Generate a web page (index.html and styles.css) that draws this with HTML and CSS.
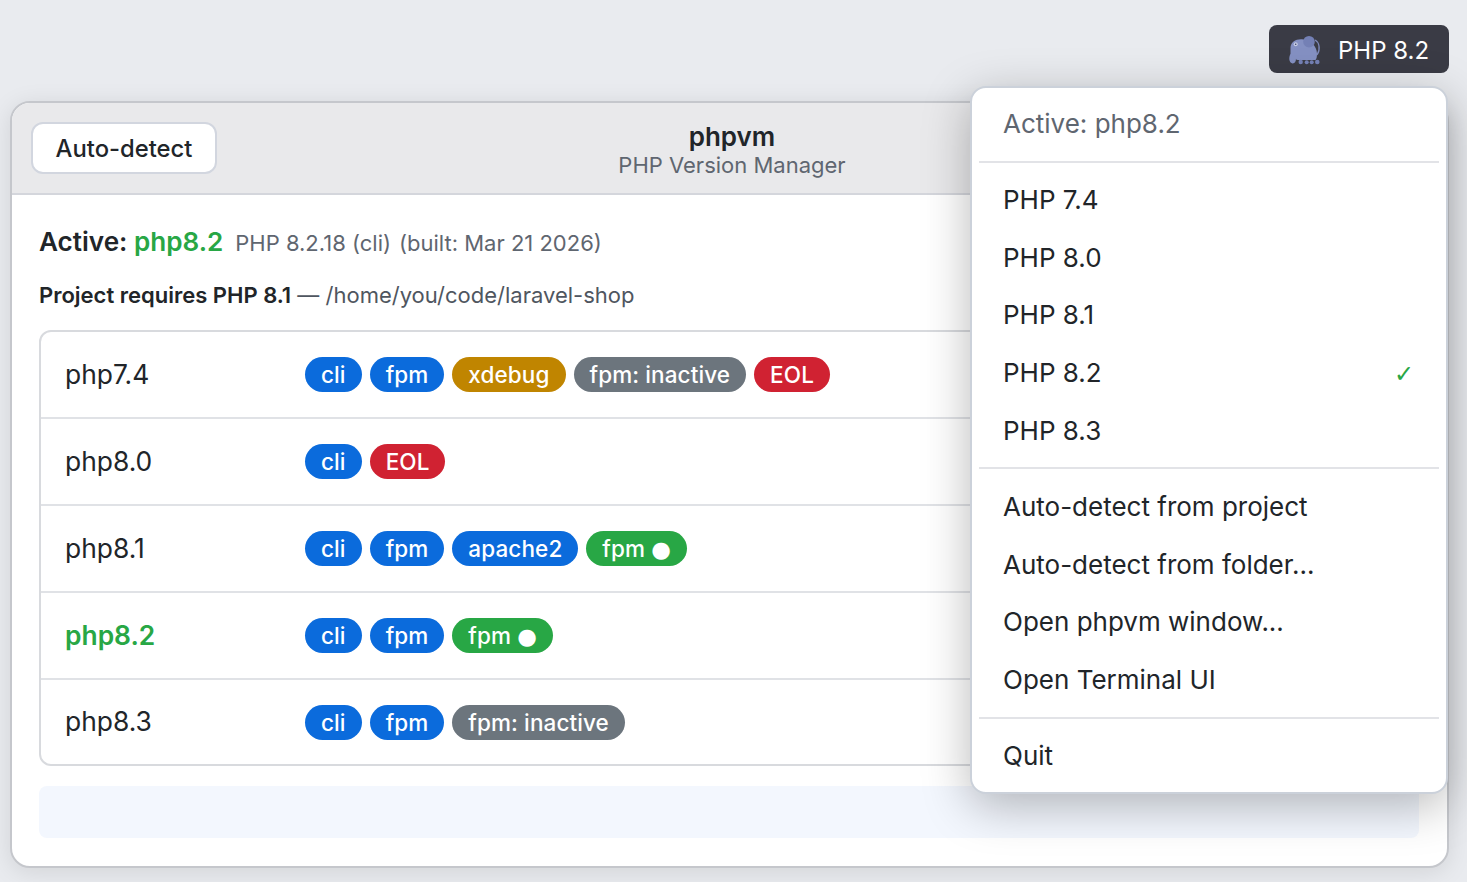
FILE: index.html
```html
<!DOCTYPE html>
<html lang="en">
  <head>
    <meta charset="UTF-8" />
    <title>phpvm</title>
    <link rel="stylesheet" href="styles.css">
  </head>
  <body>
    <div class="topbar">
      <div class="tray-button">
        <svg class="elephant" width="34" height="32" viewBox="0 0 34 32">
          <path d="M27 7c4 2 6 9 2 15" fill="none" stroke="#7f8abb" stroke-width="1.300" />
          <path d="M2.500 14.700C2.500 9 8 5.700 14 6.200 22 6.700 29 12.700 29 20.700 29 23.700 28.500 26 27.500 27H11C9 27 8 26.700 8 25.700 8 29 6 31 4 30.200 1 29.200.5 24.700 2.500 20.700z" fill="#8490c2" />
          <circle cx="21" cy="8.700" r="5.800" fill="#7480b5" />
          <circle cx="12.700" cy="29" r="2.200" fill="#7480b5" />
          <circle cx="18.700" cy="29.300" r="2" fill="#7480b5" />
          <circle cx="23.700" cy="29.300" r="2" fill="#7480b5" />
          <circle cx="29.300" cy="29" r="2.300" fill="#7480b5" />
          <circle cx="7.700" cy="11.300" r="2" fill="#c6cce4" />
          <circle cx="7.700" cy="11.300" r=".8" fill="#3f4668" />
        </svg>
        <span class="tray-label">PHP 8.2</span>
      </div>
    </div>

    <main class="window">
      <header class="titlebar">
        <button class="detect-button">Auto-detect</button>
        <div class="title">
          <h1>phpvm</h1>
          <p>PHP Version Manager</p>
        </div>
      </header>
      <section class="content">
        <div class="active-line">
          <strong>Active: <span class="green">php8.2</span></strong>
          <span class="build">PHP 8.2.18 (cli)</span>
          <span class="build">(built: Mar 21 2026)</span>
        </div>
        <p class="project"><strong>Project requires PHP 8.1</strong> — /home/you/code/laravel-shop</p>
        <ul class="versions">
          <li>
            <span class="name">php7.4</span>
            <span class="badge blue">cli</span>
            <span class="badge blue">fpm</span>
            <span class="badge amber">xdebug</span>
            <span class="badge gray">fpm: inactive</span>
            <span class="badge red">EOL</span>
          </li>
          <li>
            <span class="name">php8.0</span>
            <span class="badge blue">cli</span>
            <span class="badge red">EOL</span>
          </li>
          <li>
            <span class="name">php8.1</span>
            <span class="badge blue">cli</span>
            <span class="badge blue">fpm</span>
            <span class="badge blue">apache2</span>
            <span class="badge green-bg">fpm <span class="dot">●</span></span>
          </li>
          <li>
            <span class="name green">php8.2</span>
            <span class="badge blue">cli</span>
            <span class="badge blue">fpm</span>
            <span class="badge green-bg">fpm <span class="dot">●</span></span>
          </li>
          <li>
            <span class="name">php8.3</span>
            <span class="badge blue">cli</span>
            <span class="badge blue">fpm</span>
            <span class="badge gray">fpm: inactive</span>
          </li>
        </ul>
        <div class="status"></div>
      </section>
    </main>

    <nav class="menu">
      <div class="menu-label">Active: php8.2</div>
      <hr />
      <div class="menu-item">PHP 7.4</div>
      <div class="menu-item">PHP 8.0</div>
      <div class="menu-item">PHP 8.1</div>
      <div class="menu-item">PHP 8.2 <span class="check">✓</span></div>
      <div class="menu-item">PHP 8.3</div>
      <hr />
      <div class="menu-item">Auto-detect from project</div>
      <div class="menu-item">Auto-detect from folder...</div>
      <div class="menu-item">Open phpvm window...</div>
      <div class="menu-item">Open Terminal UI</div>
      <hr />
      <div class="menu-item">Quit</div>
    </nav>
  </body>
</html>
```

FILE: styles.css
```css
* {
  box-sizing: border-box;
}

html,
body {
  height: 100%;
}

body {
  margin: 0;
  padding: 25px 18px 0 10px;
  overflow: hidden;
  font-family: Inter, "Liberation Sans", sans-serif;
  color: #212529;
  background: #e9ebef;
}

.green {
  color: #28a745;
}

/* Top bar */
.topbar {
  display: flex;
  justify-content: flex-end;
  height: 76px;
}

.tray-button {
  display: flex;
  align-items: center;
  gap: 16px;
  width: 180px;
  height: 48px;
  padding-left: 19px;
  border-radius: 8px;
  background: #3a3b45;
  color: #fff;
  font-size: 24px;
}

.tray-label {
  padding-top: 2px;
}

.elephant {
  flex: none;
}

/* Main window */
.window {
  height: 767px;
  border: 2px solid #c5c7cc;
  border-radius: 20px;
  background: #fff;
  overflow: hidden;
  box-shadow: 0 4px 24px rgba(0, 0, 0, 0.1);
}

.titlebar {
  display: flex;
  align-items: center;
  position: relative;
  justify-content: center;
  height: 92px;
  padding: 4px 0 0 5px;
  border-bottom: 2px solid #d4d6dc;
  background: #e9e9eb;
}

.detect-button {
  position: absolute;
  left: 19px;
  top: 19px;
  width: 186px;
  height: 52px;
  border: 2px solid #d2d6df;
  border-radius: 12px;
  background: #fff;
  font-family: inherit;
  font-size: 23.800px;
  font-weight: 500;
  color: #212529;
}

.title {
  text-align: center;
}

.title h1 {
  margin: 0;
  font-size: 26px;
  font-weight: 600;
  line-height: 30px;
}

.title p {
  margin: 0;
  font-size: 22px;
  line-height: 27px;
  color: #5f6670;
}

.content {
  padding: 30px 28px 0 27px;
}

.active-line {
  display: flex;
  align-items: baseline;
  height: 34px;
  font-size: 26.100px;
  line-height: 34px;
}

.active-line strong {
  margin-right: 12px;
  font-weight: 600;
}

.build {
  margin-right: 8px;
  font-size: 22px;
  color: #5f6670;
}

.project {
  margin: 22px 0 21px;
  font-size: 22px;
  line-height: 28px;
  color: #4f5660;
}

.project strong {
  font-weight: 600;
  color: #212529;
}

/* Version list */
.versions {
  list-style: none;
  margin: 0;
  padding: 0;
  border: 2px solid #d8dade;
  border-radius: 12px;
}

.versions li {
  display: flex;
  align-items: center;
  gap: 8px;
  height: 87px;
  padding-left: 24px;
  border-bottom: 2px solid #e0e2e6;
}

.versions li:last-child {
  height: 84px;
  border-bottom: 0;
}

.name {
  width: 232px;
  padding-bottom: 2px;
  font-size: 26.400px;
}

.name.green {
  font-weight: 600;
}

.badge {
  display: inline-block;
  height: 35px;
  padding: 0 16px;
  border-radius: 18px;
  font-size: 22.500px;
  font-weight: 500;
  letter-spacing: 0.1px;
  line-height: 36px;
  color: #fff;
}

.dot {
  font-family: "DejaVu Sans", sans-serif;
}

.blue {
  background: #0b6bdc;
}

.amber {
  background: #c08500;
}

.gray {
  background: #6c757d;
}

.red {
  background: #d02232;
}

.green-bg {
  background: #28a745;
}

.status {
  height: 52px;
  margin-top: 20px;
  border-radius: 8px;
  background: #f3f7fe;
}

/* Tray menu */
.menu {
  position: absolute;
  left: 970px;
  top: 86px;
  width: 478px;
  height: 708px;
  padding: 6px 7px;
  border: 2px solid #cbd1da;
  border-radius: 16px;
  background: #fff;
  box-shadow: 0 12px 48px rgba(0, 0, 0, 0.28);
}

.menu hr {
  margin: 8px 0;
  border: 0;
  border-top: 2px solid #e2e3e7;
}

.menu-label,
.menu-item {
  display: flex;
  justify-content: space-between;
  align-items: center;
  height: 57.800px;
  padding: 0 25px 0 24px;
  font-size: 26px;
}

.menu-label {
  height: 58.500px;
  color: #5f6670;
}

.check {
  padding-top: 2px;
  color: #28a745;
  font-family: "DejaVu Sans", sans-serif;
  font-size: 24px;
}
```
